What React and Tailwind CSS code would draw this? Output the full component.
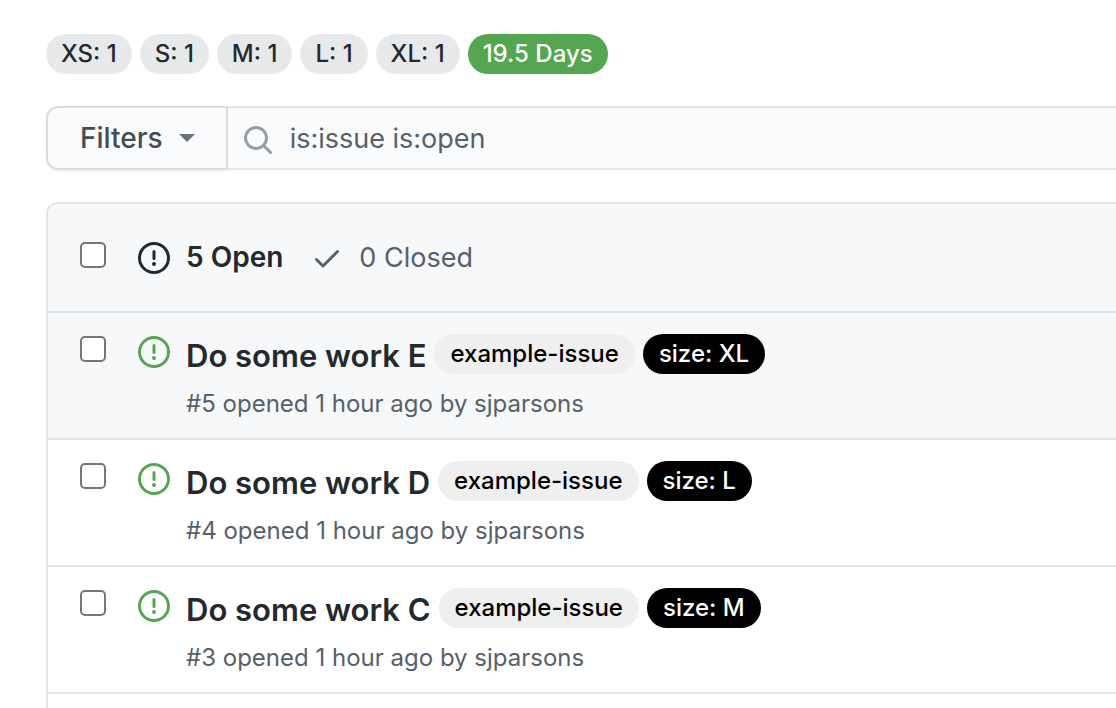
import React from "react";

const totals = ["XS: 1", "S: 1", "M: 1", "L: 1", "XL: 1"];

const issues = [
  { number: 5, title: "Do some work E", size: "size: XL", active: true },
  { number: 4, title: "Do some work D", size: "size: L" },
  { number: 3, title: "Do some work C", size: "size: M" },
];

function Icon({ className, d }) {
  return (
    <svg
      aria-hidden="true"
      viewBox="0 0 16 16"
      className={`size-8 shrink-0 ${className}`}
      fill="currentColor"
    >
      <path fillRule="evenodd" d={d} />
    </svg>
  );
}

const ISSUE =
  "M8 1.5a6.5 6.5 0 100 13 6.5 6.5 0 000-13zM0 8a8 8 0 1116 0A8 8 0 010 8zm9 3a1 1 0 11-2 0 1 1 0 012 0zm-.25-6.25a.75.75 0 00-1.5 0v3.5a.75.75 0 001.5 0v-3.5z";
const CHECK =
  "M13.78 4.22a.75.75 0 010 1.06l-7.25 7.25a.75.75 0 01-1.06 0L2.22 9.28a.75.75 0 011.06-1.06L6 10.94l6.72-6.72a.75.75 0 011.06 0z";
const SEARCH =
  "M11.5 7a4.499 4.499 0 11-8.998 0A4.499 4.499 0 0111.5 7zm-.82 4.74a6 6 0 111.06-1.06l3.04 3.04a.75.75 0 11-1.06 1.06l-3.04-3.04z";

function Checkbox({ label }) {
  return (
    <input
      type="checkbox"
      aria-label={label}
      className="size-[26px] shrink-0 appearance-none rounded-[5px] border-2 border-[#767676] bg-white checked:bg-[#0969da]"
    />
  );
}

function Chip({ className, children }) {
  return (
    <span
      className={`h-10 rounded-full text-2xl leading-10 font-medium whitespace-nowrap ${className}`}
    >
      {children}
    </span>
  );
}

function IssueRow({ number, title, size, active }) {
  return (
    <li
      className={`flex items-start border-t-2 border-[#e1e4e8] pt-[21px] pb-4 pl-8 ${
        active ? "bg-[#f6f8fa]" : "bg-white"
      }`}
    >
      <div className="flex items-start gap-8 pt-0.5">
        <Checkbox label={`Select ${title}`} />
        <Icon d={ISSUE} className="text-[#54a651]" />
      </div>
      <div className="pl-4">
        <div className="flex items-start gap-2">
          <a
            href={`#issue-${number}`}
            className="text-[31px] leading-[44px] font-semibold whitespace-nowrap text-[#24292e]"
          >
            {title}
          </a>
          <Chip className="bg-[#efefef] px-4 text-black">example-issue</Chip>
          <Chip className="bg-black px-4 text-white">{size}</Chip>
        </div>
        <p className="pt-2 text-2xl leading-9 text-[#586069]">
          #{number} opened 1 hour ago by sjparsons
        </p>
      </div>
    </li>
  );
}

export default function App() {
  return (
    <main className="flex min-h-screen flex-col overflow-hidden bg-white pt-[34px] pl-[46px] font-['Inter',sans-serif]">
      <div className="flex gap-2">
        {totals.map((total) => (
          <Chip key={total} className="bg-[#e8e9eb] px-[15px] text-[#24292e]">
            {total}
          </Chip>
        ))}
        <Chip className="bg-[#54a651] px-[15px] text-white">19.5 Days</Chip>
      </div>

      <form className="mt-8 flex h-16">
        <button
          type="button"
          className="flex items-center gap-4 rounded-l-xl border-2 border-[#d9dbdd] bg-[#fafbfc] pr-[31px] pl-8 text-[28px] font-medium text-[#444d56] shadow-[0_2px_0_#f5f6f6]"
        >
          Filters
          <svg aria-hidden="true" viewBox="0 0 16 8" className="h-2 w-4" fill="#6a7178">
            <path d="M0 0h16L8 8z" />
          </svg>
        </button>
        <label className="flex flex-1 items-center gap-4 border-y-2 border-[#e1e4e8] bg-[#fafbfc] pt-1 pl-3.5 shadow-[inset_0_2px_0_#f6f7f9]">
          <Icon d={SEARCH} className="text-[#959da5]" />
          <input
            type="text"
            aria-label="Search issues"
            defaultValue="is:issue is:open"
            className="h-11 min-w-0 flex-1 bg-transparent pb-1 text-[27px] text-[#586069] outline-none"
          />
        </label>
      </form>

      <section className="mt-8 flex flex-1 flex-col rounded-tl-xl border-t-2 border-l-2 border-[#e1e4e8]">
        <header className="flex items-center rounded-tl-[10px] bg-[#f6f8fa] py-8 pl-8 text-[28px] leading-[43px]">
          <div className="flex items-start gap-8">
            <Checkbox label="Select all issues" />
            <Icon d={ISSUE} className="text-[#24292e]" />
          </div>
          <a href="#open" className="pl-4 font-semibold text-[#24292e]">
            5 Open
          </a>
          <a href="#closed" className="flex items-center gap-4 pl-7 text-[27px] text-[#586069]">
            <Icon d={CHECK} className="" />0 Closed
          </a>
        </header>
        <ul className="border-b-2 border-[#e1e4e8]">
          {issues.map((issue) => (
            <IssueRow key={issue.number} {...issue} />
          ))}
        </ul>
      </section>
    </main>
  );
}
